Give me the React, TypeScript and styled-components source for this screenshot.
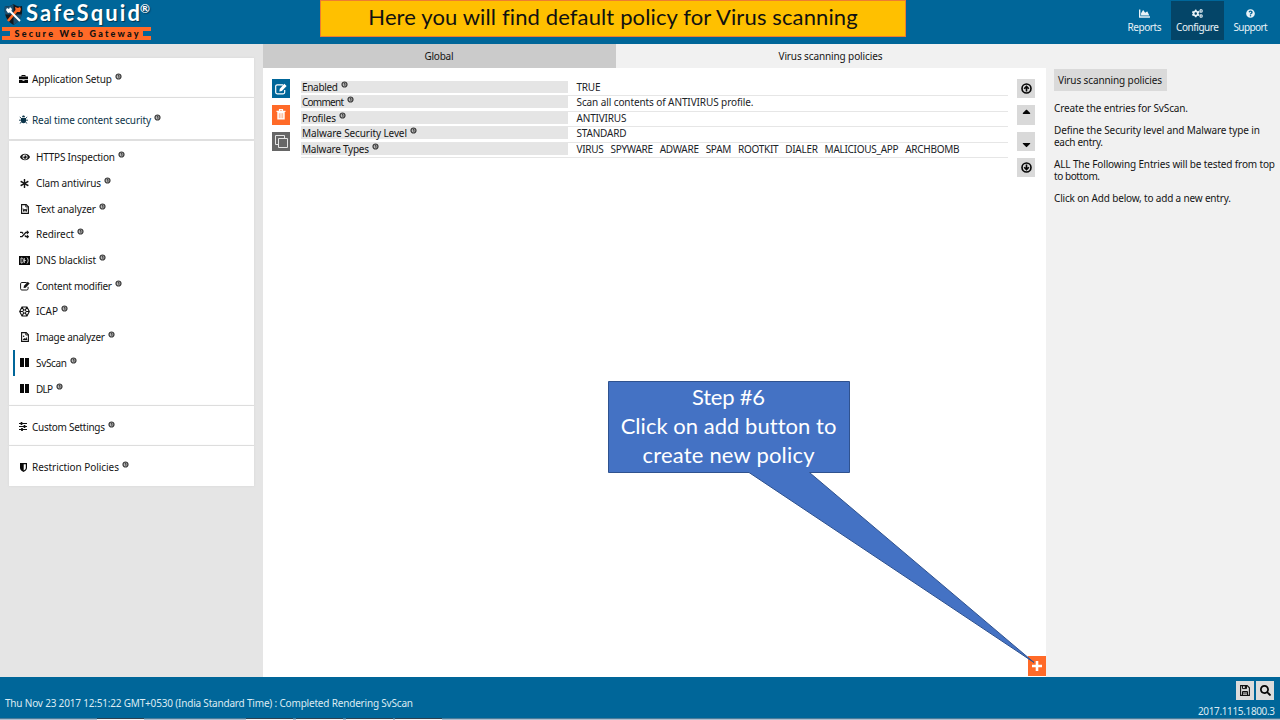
import React, { useLayoutEffect, useRef, useState } from 'react';
import styled, { createGlobalStyle, css } from 'styled-components';
import { FaEye, FaAsterisk, FaRandom, FaChartArea, FaCogs, FaQuestionCircle, FaSearch, FaCaretUp, FaCaretDown } from 'react-icons/fa';

const Global = createGlobalStyle`
  * { box-sizing: border-box; }
  body { margin: 0; overflow: hidden; background: #fff; }
  p { margin: 0; }
`;
const Page = styled.div`
  position: relative;
  width: 1280px;
  height: 720px;
  display: flex;
  flex-direction: column;
  font-family: "Noto Sans", "Open Sans", sans-serif;
  font-stretch: 87.5%;
  font-size: 10px;
  color: #151515;
  svg { display: block; flex: none; }
`;
const FitText = styled.span`
  display: inline-block;
  white-space: pre;
`;

/* Spreads the letters so that a line fills the given width. */
function Fit({ w, children }: { w: number; children: string }) {
  const ref = useRef<HTMLSpanElement>(null);
  const [gap, setGap] = useState(0);
  useLayoutEffect(() => {
    const el = ref.current;
    if (el) setGap((w - el.getBoundingClientRect().width) / (children.length - 1));
  }, [w, children]);
  return <FitText ref={ref} style={{ letterSpacing: gap, marginRight: -gap }}>{children}</FitText>;
}

const Header = styled.header`
  height: 44px;
  flex: none;
  display: flex;
  justify-content: space-between;
  background: #006699;
`;
const Brand = styled.div`
  width: 154px;
  padding: 2px 0 0 2px;
`;
const BrandTop = styled.div`
  display: flex;
  height: 25px;
  align-items: center;
  padding-left: 2px;
  gap: 3px;
`;
const BrandName = styled.div`
  font: 700 22px/24px Lato, sans-serif;
  height: 24px;
  margin-top: -4px;
  color: #fff;
  text-shadow: 1px 1px 1px #003350;
  display: flex;
`;
const Reg = styled.span`
  font: 700 12px/14px Lato, sans-serif;
  margin: 1px 0 0 0;
`;
const Ribbon = styled.div`
  width: 149px;
  height: 13px;
  display: flex;
  align-items: center;
  justify-content: space-between;
  background: #ff6a28;
`;
const Notch = styled.i`
  width: 8px;
  height: 5px;
  background: #006699;
`;
const Tagline = styled.span`
  font: 900 9px/12px Lato, sans-serif;
  color: #111;
`;
const Nav = styled.nav`
  display: flex;
  padding: 1px 3px 0 0;
`;
const NavItem = styled.div<{ $active?: boolean }>`
  width: 53px;
  height: 39px;
  display: flex;
  flex-direction: column;
  align-items: center;
  padding-top: 7px;
  gap: 1px;
  line-height: 14px;
  color: #e9f2f7;
  background: ${p => (p.$active ? '#044568' : 'transparent')};
`;
const NavIcon = styled.span`
  height: 11px;
  display: flex;
  align-items: center;
`;
const Body = styled.div`
  height: 633px;
  flex: none;
  display: flex;
`;
const Sidebar = styled.aside`
  width: 263px;
  flex: none;
  padding: 14px 9px 0;
  background: #e5e5e5;
`;
const Card = styled.div<{ $h: number; $blue?: boolean }>`
  height: ${p => p.$h}px;
  width: 245px;
  display: flex;
  align-items: center;
  padding: 2px 0 0 9px;
  gap: 4px;
  margin-bottom: 1px;
  background: #fff;
  box-shadow: 0 0 2px #d6d6d6;
  color: ${p => (p.$blue ? '#0b3449' : '#151515')};
`;
const SubList = styled.div`
  width: 245px;
  height: 264px;
  padding: 3.500px 0 0 4px;
  margin: 2px 0 1px;
  background: #fff;
  box-shadow: 0 0 2px #d6d6d6;
`;
const SubItem = styled.div<{ $active?: boolean }>`
  height: 25.7px;
  display: flex;
  align-items: center;
  padding-left: 4px;
  gap: 6px;
  border-left: 2px solid ${p => (p.$active ? '#006699' : 'transparent')};
`;
const IconBox = styled.span<{ $w?: number }>`
  width: ${p => p.$w || 10}px;
  height: 12px;
  display: flex;
  align-items: center;
  justify-content: center;
`;
const Label = styled.span`
  display: flex;
  align-items: center;
  line-height: 14px;
`;
const InfoMark = styled.span`
  margin: -5px 0 0 3px;
`;
const Main = styled.main`
  width: 783px;
  flex: none;
  display: flex;
  flex-direction: column;
  background: #fff;
`;
const Tabs = styled.div`
  display: flex;
  height: 24px;
  flex: none;
`;
const Tab = styled.div<{ $w: number; $active?: boolean }>`
  width: ${p => p.$w}px;
  display: flex;
  justify-content: center;
  padding-right: 1px;
  line-height: 24px;
  background: ${p => (p.$active ? '#f1f1f1' : '#cbcbcb')};
`;
const Entry = styled.div`
  flex: 1;
  display: flex;
  padding: 11px 11px 0 9px;
`;
const Buttons = styled.div`
  display: flex;
  flex-direction: column;
  gap: 7px;
  width: 18px;
`;
const square = css`
  width: 18px;
  height: 19.3px;
  display: flex;
  justify-content: center;
`;
const Tool = styled.button<{ $bg: string; $align?: string }>`
  ${square}
  border: 0;
  padding: 0;
  flex: none;
  align-items: ${p => p.$align || 'center'};
  background: ${p => p.$bg};
  color: #fff;
`;
const Order = styled(Tool)`
  color: #050505;
`;
const Table = styled.div`
  width: 707px;
  margin: 2px 9px 0 11px;
`;
const Row = styled.div`
  height: 15.4px;
  display: flex;
  border-bottom: 1px solid #e6e6e6;
`;
const Key = styled.div`
  width: 267px;
  height: 12px;
  padding-left: 1px;
  background: #e5e5e5;
  display: flex;
  align-items: center;
`;
const Value = styled.div`
  padding-left: 8.500px;
  height: 12px;
  line-height: 12px;
  color: #1b2328;
`;
const AddRow = styled.div`
  display: flex;
  justify-content: flex-end;
  padding: 0 0.5px 1.500px 0;
`;
const Help = styled.aside`
  flex: 1;
  padding: 25px 0 0 8px;
  background: #f1f1f1;
`;
const HelpTitle = styled.div`
  width: 113px;
  height: 22px;
  padding-left: 4px;
  line-height: 23px;
  margin-bottom: 11px;
  background: #dadada;
`;
const Para = styled.p`
  line-height: 12.7px;
  margin-bottom: 8.800px;
  white-space: nowrap;
`;
const Footer = styled.footer`
  height: 41px;
  flex: none;
  display: flex;
  justify-content: space-between;
  padding: 4px 5px 0 5px;
  background: #006699;
  color: #dcebf3;
`;
const Status = styled.div`
  padding-top: 15px;
  line-height: 14px;
`;
const FootRight = styled.div`
  display: flex;
  flex-direction: column;
  align-items: flex-end;
  line-height: 14px;
  gap: 4px;
`;
const FootTools = styled.div`
  display: flex;
  gap: 2px;
  padding-right: 1px;
`;
const Edge = styled.div`
  height: 2px;
  flex: none;
  display: flex;
  background: #aebfd0;
  border-top: 1px solid #4a7c9a;
`;
const Slot = styled.i<{ $before: number }>`
  width: 47px;
  height: 2px;
  margin: -1px 0 0 ${p => p.$before}px;
  background: #f4f6f8;
  border-top: 1px solid #2d4050;
`;
const Banner = styled.div`
  position: absolute;
  left: 320px;
  top: 0;
  width: 586px;
  height: 37px;
  display: flex;
  justify-content: center;
  border: 1px solid #ed7d31;
  background: #ffc000;
  color: #111;
  font: 400 22px/32px Lato, sans-serif;
`;
const Callout = styled.div`
  position: absolute;
  left: 608px;
  top: 381px;
  width: 242px;
  height: 92px;
  display: flex;
  flex-direction: column;
  align-items: center;
  padding: 1px 1px 0 0;
  color: #fff;
  font: 400 22px/29px Lato, sans-serif;
`;
const CalloutShape = styled.svg`
  position: absolute;
  left: 0;
  top: 0;
`;
const Line = styled.div`
  position: relative;
`;

const Info = () => (
  <InfoMark>
    <svg width="7" height="7" viewBox="0 0 7 7"><circle cx="3.5" cy="3.5" r="2.5" fill="#b8b8b8" stroke="#3a3a3a" strokeWidth="1.2" /><path d="M2.800 2.300h1.100v2.500" fill="none" stroke="#333" strokeWidth="1" /></svg>
  </InfoMark>
);
const Named = ({ t, w }: { t: string; w: number }) => <Label><Fit w={w}>{t}</Fit><Info /></Label>;

const Briefcase = () => (
  <svg width="9" height="8" viewBox="0 0 9 8"><path d="M2.800 1.500V.5h3.400v1" fill="none" stroke="#080808" /><path d="M0 1.500h9v2.800H0zM0 5h3.500v.8h2V5H9v3H0z" fill="#080808" /></svg>
);
const Bug = () => (
  <svg width="9" height="9" viewBox="0 0 9 9" fill="#0b3449" stroke="#0b3449"><path d="M3 2.200C3 0 6 0 6 2.200z" stroke="none" /><path d="M2 3h5v3c0 3-5 3-5 0z" stroke="none" /><path d="M.8 2l1.700 1.500M8.200 2L6.500 3.500M0 5.200h9M.8 8.500L2.500 7M8.200 8.500L6.500 7" strokeWidth=".9" /></svg>
);
const FilePage = ({ children }: { children: React.ReactNode }) => (
  <svg width="8" height="10" viewBox="0 0 8 10" fill="none" stroke="#111"><path d="M.6.6h4.600l2.200 2.200v6.600H.6z" strokeWidth="1.100" /><path d="M4.800.6V3h2.600" strokeWidth=".9" />{children}</svg>
);
const Pencil = ({ size }: { size: number }) => (
  <svg width={size} height={size} viewBox="0 0 12 12" fill="none" stroke="currentColor"><path d="M8 1.800H2.200C1.300 1.800.7 2.400.7 3.300v6c0 .9.600 1.500 1.500 1.500h6c.9 0 1.500-.6 1.500-1.500V7" strokeWidth="1.200" /><path d="M4.300 8.500l.5-2.800L9.300.8l2.300 2.300-4.700 4.900z" fill="currentColor" stroke="none" /></svg>
);
const Dns = () => (
  <svg width="11" height="9" viewBox="0 0 11 9"><rect width="11" height="9" fill="#080808" /><path d="M2 2v5h.8c2 0 2-5 0-5zM5.300 2v5M5.300 4.500h1.500M8 1.500c1.500 1.500 1.500 4.500 0 6" stroke="#fff" strokeWidth=".8" fill="none" /></svg>
);
const Lattice = () => (
  <svg width="11" height="11" viewBox="0 0 11 11" fill="none" stroke="#111"><path d="M3 1h5l2.300 4.500L8 10H3L.7 5.500zM3 1l5 9M8 1l-5 9M1 5.500h9" strokeWidth="1.100" /><circle cx="5.500" cy="5.500" r="1.600" fill="#fff" /></svg>
);
const Columns = () => (
  <svg width="9" height="9" viewBox="0 0 9 9"><path d="M0 0h4v9H0zM5 0h4v9H5z" fill="#080808" /></svg>
);
const Sliders = () => (
  <svg width="8" height="9" viewBox="0 0 8 9" stroke="#111"><path d="M0 1.500h8M0 4.500h8M0 7.500h8" /><path d="M2.500 0v3M5.500 3v3M3 6v3" strokeWidth="1.700" /></svg>
);
const Shield = () => (
  <svg width="7" height="9" viewBox="0 0 7 9"><path d="M0 0h7v5c0 2-2 3.300-3.500 4C2 8.300 0 7 0 5z" fill="#080808" /><path d="M3.700 1.300H5.800V5c0 1-1 1.900-2.100 2.500z" fill="#fff" /></svg>
);
const Trash = () => (
  <svg width="10" height="11" viewBox="0 0 10 11" fill="none" stroke="#fff"><path d="M.5 2.300h9M3.500 2V.7h3V2" strokeWidth="1.200" /><path d="M1.300 3h7.400v7.500H1.300z" fill="#fff" stroke="none" /><path d="M3.300 4.200v5M5 4.200v5M6.700 4.200v5" stroke="#ff8f5c" strokeWidth=".7" /></svg>
);
const Copy = () => (
  <svg width="13" height="13" viewBox="0 0 13 13" fill="none" stroke="#e4e4e4"><path d="M3.500 9.500h-3v-9h9v3" /><path d="M3.500 3.500h9v9h-9z" /></svg>
);
const Plus = () => (
  <svg width="10" height="10" viewBox="0 0 10 10"><path d="M3.700 0h2.600v3.700H10v2.600H6.300V10H3.700V6.300H0V3.700h3.700z" fill="#fff" /></svg>
);
const Floppy = () => (
  <svg width="10" height="11" viewBox="0 0 10 11" fill="none" stroke="#111"><path d="M.6.6h6.600l2.200 2.200v7.600H.6z" strokeWidth="1.100" /><path d="M2.500.6v3h4v-3M2.500 10V6.500h5V10M3 8h4" /><path d="M4.800 1h1.200v2H4.800z" fill="#111" stroke="none" /></svg>
);
const CircleArrow = ({ down }: { down?: boolean }) => (
  <svg width="11" height="11" viewBox="0 0 11 11" fill="none" stroke="#050505"><circle cx="5.500" cy="5.500" r="4.500" strokeWidth="1.600" /><path d={down ? 'M5.500 2.500v5M3.200 5.300l2.300 2.400 2.300-2.400' : 'M5.500 8.500v-5M3.200 5.700l2.300-2.400 2.300 2.400'} strokeWidth="1.600" /></svg>
);
const Crest = () => (
  <svg width="19" height="21" viewBox="0 0 19 21"><path d="M1 2c3 1 6 0 8.500-2C12 2 15 3 18 2c1 8-1 15-8.500 19C2 17 0 10 1 2z" fill="#101820" /><path d="M9.500 0v10.500H1C.6 7.500.7 4.500 1 2c3 1 6 0 8.500-2zM9.500 10.500H18C16.800 15.300 14 18.700 9.500 21z" fill="#1c4f70" /><path d="M4 17L14 5" stroke="#ff6a28" strokeWidth="2.600" /><path d="M11 3l3 1 2-1 1 2-1 3-4 0z" fill="#ff6a28" /><path d="M5 6l11 11" stroke="#fff" strokeWidth="2" /><path d="M2 6l1-2 2 1 1-2 2 2-1 3-3 1z" fill="#fff" /></svg>
);

const items: [React.ReactNode, string, number, boolean?][] = [
  [<FaEye size={10} />, 'HTTPS Inspection', 79],
  [<FaAsterisk size={9} />, 'Clam antivirus', 65],
  [<FilePage><path d="M2 4.500l.8 3L4 5l1.200 2.500.8-3" /></FilePage>, 'Text analyzer', 60],
  [<FaRandom size={9} />, 'Redirect', 38],
  [<Dns />, 'DNS blacklist', 60],
  [<Pencil size={10} />, 'Content modifier', 76],
  [<Lattice />, 'ICAP', 22],
  [<FilePage><path d="M1.500 8l1.800-2 1 1 1-2L6.500 8z" fill="#111" stroke="none" /><circle cx="2.600" cy="4.300" r=".8" fill="#111" stroke="none" /></FilePage>, 'Image analyzer', 69],
  [<Columns />, 'SvScan', 31, true],
  [<Columns />, 'DLP', 17],
];
const rows: [string, number, string, number][] = [
  ['Enabled', 36, 'TRUE', 24],
  ['Comment', 42, 'Scan all contents of ANTIVIRUS profile.', 177],
  ['Profiles', 34, 'ANTIVIRUS', 50],
  ['Malware Security Level', 105, 'STANDARD', 50],
  ['Malware Types', 67, 'VIRUS   SPYWARE   ADWARE   SPAM   ROOTKIT   DIALER   MALICIOUS_APP   ARCHBOMB', 383],
];

export default function App() {
  return (
    <Page>
      <Global />
      <Header>
        <Brand>
          <BrandTop><Crest /><BrandName><Fit w={114}>SafeSquid</Fit><Reg>®</Reg></BrandName></BrandTop>
          <Ribbon><Notch /><Tagline><Fit w={124}>Secure Web Gateway</Fit></Tagline><Notch /></Ribbon>
        </Brand>
        <Nav>
          <NavItem><NavIcon><FaChartArea size={11} /></NavIcon><Fit w={34}>Reports</Fit></NavItem>
          <NavItem $active><NavIcon><FaCogs size={11} /></NavIcon><Fit w={43}>Configure</Fit></NavItem>
          <NavItem><NavIcon><FaQuestionCircle size={9} /></NavIcon><Fit w={34}>Support</Fit></NavItem>
        </Nav>
      </Header>
      <Body>
        <Sidebar>
          <Card $h={39}><IconBox><Briefcase /></IconBox><Named t="Application Setup" w={80} /></Card>
          <Card $h={41} $blue><IconBox><Bug /></IconBox><Named t="Real time content security" w={119} /></Card>
          <SubList>
            {items.map(([icon, t, w, active]) => (
              <SubItem key={t} $active={active}><IconBox $w={11}>{icon}</IconBox><Named t={t} w={w} /></SubItem>
            ))}
          </SubList>
          <Card $h={39}><IconBox><Sliders /></IconBox><Named t="Custom Settings" w={73} /></Card>
          <Card $h={40}><IconBox><Shield /></IconBox><Named t="Restriction Policies" w={87} /></Card>
        </Sidebar>
        <Main>
          <Tabs>
            <Tab $w={353}><Fit w={29}>Global</Fit></Tab>
            <Tab $w={430} $active><Fit w={104}>Virus scanning policies</Fit></Tab>
          </Tabs>
          <Entry>
            <Buttons>
              <Tool $bg="#006699"><Pencil size={12} /></Tool>
              <Tool $bg="#ff6a28"><Trash /></Tool>
              <Tool $bg="#666"><Copy /></Tool>
            </Buttons>
            <Table>
              {rows.map(([k, kw, v, vw]) => (
                <Row key={k}><Key><Named t={k} w={kw} /></Key><Value><Fit w={vw}>{v}</Fit></Value></Row>
              ))}
            </Table>
            <Buttons>
              <Order $bg="#d9d9d9"><CircleArrow /></Order>
              <Order $bg="#d9d9d9" $align="flex-start"><FaCaretUp size={13} /></Order>
              <Order $bg="#d9d9d9" $align="flex-end"><FaCaretDown size={13} /></Order>
              <Order $bg="#d9d9d9"><CircleArrow down /></Order>
            </Buttons>
          </Entry>
          <AddRow><Tool $bg="#ff6a28"><Plus /></Tool></AddRow>
        </Main>
        <Help>
          <HelpTitle><Fit w={104}>Virus scanning policies</Fit></HelpTitle>
          <Para><Fit w={134}>Create the entries for SvScan.</Fit></Para>
          <Para><Fit w={206}>Define the Security level and Malware type in</Fit><br /><Fit w={49}>each entry.</Fit></Para>
          <Para><Fit w={221}>ALL The Following Entries will be tested from top</Fit><br /><Fit w={46}>to bottom.</Fit></Para>
          <Para><Fit w={177}>Click on Add below, to add a new entry.</Fit></Para>
        </Help>
      </Body>
      <Footer>
        <Status><Fit w={408}>Thu Nov 23 2017 12:51:22 GMT+0530 (India Standard Time) : Completed Rendering SvScan</Fit></Status>
        <FootRight>
          <FootTools>
            <Order $bg="#dcdcdc"><Floppy /></Order>
            <Order $bg="#dcdcdc"><FaSearch size={11} /></Order>
          </FootTools>
          <Fit w={77}>2017.1115.1800.3</Fit>
        </FootRight>
      </Footer>
      <Edge><Slot $before={97} /><Slot $before={102} /><Slot $before={3} /><Slot $before={3} /><Slot $before={2} /></Edge>
      <Banner><Fit w={489}>Here you will find default policy for Virus scanning</Fit></Banner>
      <Callout>
        <CalloutShape width="430" height="285" viewBox="0 0 430 285">
          <path d="M.5.500h241v91H201.500L426 281.500 141 91.500H.5z" fill="#4472c4" stroke="#2f528f" />
        </CalloutShape>
        <Line><Fit w={73}>Step #6</Fit></Line>
        <Line><Fit w={215}>Click on add button to</Fit></Line>
        <Line><Fit w={172}>create new policy</Fit></Line>
      </Callout>
    </Page>
  );
}
